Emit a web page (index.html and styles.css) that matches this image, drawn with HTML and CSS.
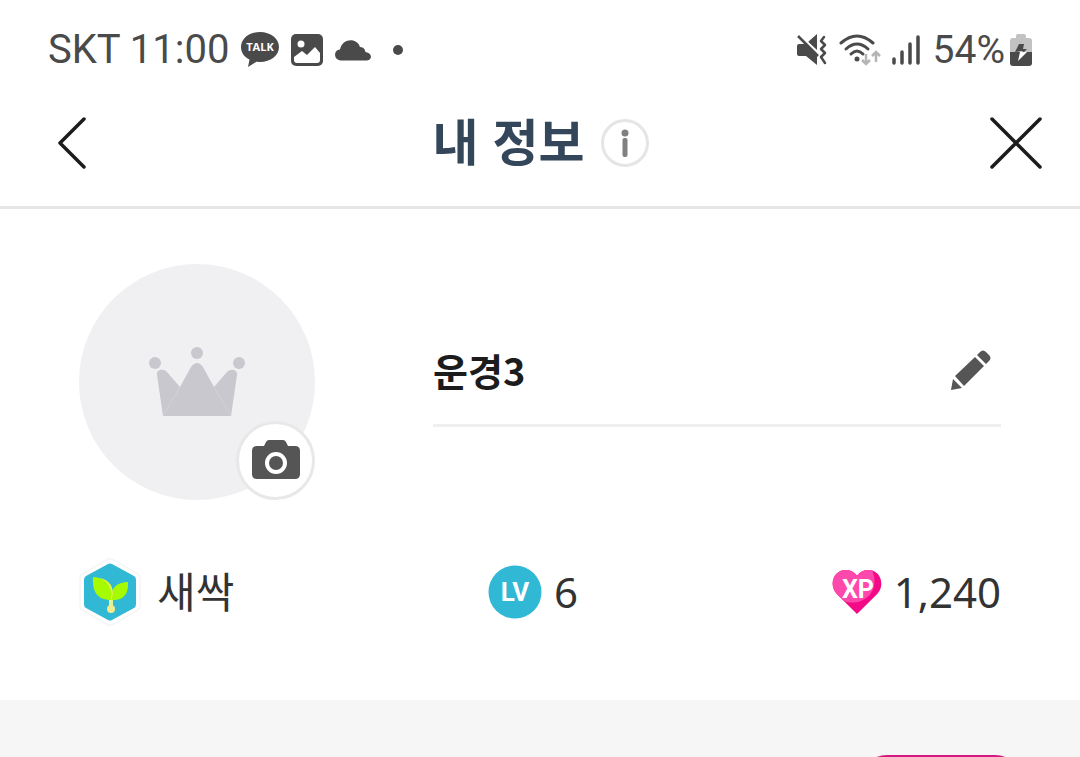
FILE: index.html
```html
<!DOCTYPE html>
<html lang="ko">

<head>
  <meta charset="utf-8">
  <meta name="viewport" content="width=device-width, initial-scale=1">
  <title>내 정보</title>
  <link rel="stylesheet" href="styles.css">
</head>

<body>
  <div class="status-bar">
    <div class="status-left">
      <span class="carrier">SKT 11:00</span>
      <svg class="icon-talk" width="38" height="36" viewBox="0 0 38 36">
        <path fill="#4a4a4a" d="M19 0C8.500 0 0 6.500 0 15c0 5.500 3.300 10 8.500 12.600L7 35l8.500-5.300 3.500.3c10.500 0 19-6.500 19-15S29.500 0 19 0z"/>
        <text x="19" y="19" text-anchor="middle" class="talk-text">TALK</text>
      </svg>
      <svg class="icon-photo" width="32" height="32" viewBox="0 0 32 32">
        <rect width="32" height="32" rx="5" fill="#4a4a4a"/>
        <circle cx="10" cy="10" r="3.500" fill="#fff"/>
        <path fill="#fff" d="M3 23l8-6 5 4 8-8 5 6v7q0 3-3 3H6q-3 0-3-3z"/>
      </svg>
      <svg class="icon-cloud" width="36" height="21" viewBox="0 0 36 21">
        <path fill="#4a4a4a" d="M6 20.500C-2 20-1.500 10 5 9.500 7-2 22-3 25 7c4 0 5 3 5.500 5 7 1 7 8 1.500 8.500z"/>
      </svg>
      <span class="dot"></span>
    </div>
    <div class="status-right">
      <svg width="32" height="32" viewBox="0 0 32 32">
        <path fill="#4a4a4a" d="M1 12q0-2 2-2h7l11 12v9L10 22H3q-2 0-2-2zM12 8l9-8v16z"/>
        <path fill="none" stroke="#fff" stroke-width="2" d="M4 1l20 20"/>
        <path fill="none" stroke="#4a4a4a" stroke-width="2.500" d="M2 2l20 20"/>
        <path fill="none" stroke="#4a4a4a" stroke-width="2.500" stroke-linejoin="round" stroke-linecap="round" d="M28 3l-3 4 4 4-4 4 4 4-4 4 4 6"/>
      </svg>
      <svg class="icon-wifi" width="42" height="32" viewBox="0 0 42 32">
        <g fill="none" stroke="#4a4a4a" stroke-width="3" stroke-linecap="round">
          <path d="M2 9q16-14 32 0"/>
          <path d="M7 15q11-10 22 0"/>
          <path d="M12 20q6-6 12 0"/>
        </g>
        <circle cx="18" cy="25" r="2.500" fill="#4a4a4a"/>
        <path fill="none" stroke="#b5b5b5" stroke-width="2.500" d="M27 20v10m-4-4l4 4 4-4M37 28V18m-4 4l4-4 4 4"/>
      </svg>
      <svg class="icon-signal" width="28" height="30" viewBox="0 0 28 30">
        <path fill="none" stroke="#4a4a4a" stroke-width="3.500" stroke-linecap="round" d="M2 24v4M10 17v11M18 9v19M26 2v26"/>
      </svg>
      <span class="battery-level">54%</span>
      <svg class="icon-battery" width="22" height="32" viewBox="0 0 22 32">
        <path fill="#c2c2c2" d="M6 4V2q0-2 2-2h6q2 0 2 2v2h3q3 0 3 3v11H0V7q0-3 3-3z"/>
        <path fill="#4a4a4a" d="M0 18h22v11q0 3-3 3H3q-3 0-3-3z"/>
        <path fill="#4a4a4a" d="M9 10h5l-1 5h4l-3 3H5z"/>
        <path fill="#fff" d="M5 18h5l-2 9 9-9h-5l1-1z"/>
      </svg>
    </div>
  </div>

  <header class="header">
    <button class="icon-btn" type="button" aria-label="뒤로">
      <svg width="30" height="52" viewBox="0 0 30 52">
        <path fill="none" stroke="#1c1c1c" stroke-width="3.500" stroke-linecap="round" stroke-linejoin="round" d="M27 2L3 26l24 24"/>
      </svg>
    </button>
    <div class="title-wrap">
      <h1 class="title">내 정보</h1>
      <button class="info-btn" type="button" aria-label="안내">
        <svg width="8" height="28" viewBox="0 0 8 28">
          <circle cx="4" cy="4" r="3.500" fill="#808080"/>
          <rect x="1.500" y="9" width="5" height="19" rx="2" fill="#808080"/>
        </svg>
      </button>
    </div>
    <button class="icon-btn" type="button" aria-label="닫기">
      <svg width="52" height="52" viewBox="0 0 52 52">
        <path fill="none" stroke="#1c1c1c" stroke-width="3.500" stroke-linecap="round" d="M2 2l48 48M50 2L2 50"/>
      </svg>
    </button>
  </header>

  <main class="profile">
    <div class="profile-top">
      <div class="avatar">
        <svg width="96" height="70" viewBox="0 0 96 70">
          <g fill="#c9c8ce">
            <circle cx="6" cy="16" r="6"/>
            <circle cx="48" cy="6" r="6"/>
            <circle cx="90" cy="16" r="6"/>
            <path d="M14 69L8 28c-1-5 6-7 10-3l13 15 11-20q6-8 12 0l11 20 13-15c4-4 11-2 10 3l-6 41z"/>
          </g>
          <path fill="none" stroke="#d3d2d8" stroke-width="1" d="M14 69l17-29M82 69L65 40"/>
        </svg>
        <button class="camera-btn" type="button" aria-label="사진 변경">
          <svg width="48" height="40" viewBox="0 0 48 40">
            <path fill="#555" d="M5 6h7l2-4q1-2 3-2h14q2 0 3 2l2 4h7q5 0 5 5v23q0 5-5 5H5q-5 0-5-5V11q0-5 5-5z"/>
            <circle cx="24" cy="23" r="9" fill="#555" stroke="#fff" stroke-width="4"/>
          </svg>
        </button>
      </div>
      <div class="name-row">
        <span class="name">운경3</span>
        <button class="icon-btn" type="button" aria-label="이름 수정">
          <svg width="40" height="40" viewBox="0 0 40 40">
            <path fill="#555" d="M0 40l2-11 9 9zM4 26L24 7l9 9-20 20zM26 5l3-3q3-3 6 0l3 3q3 3 0 6l-3 3z"/>
          </svg>
        </button>
      </div>
    </div>

    <div class="stats">
      <div class="stat">
        <svg class="badge" width="62" height="68" viewBox="0 0 62 68">
          <path fill="#fff" stroke="#f7f7f7" stroke-width="2" stroke-linejoin="round" d="M27 2q4-2 8 0l22 13q4 2 4 7v24q0 5-4 7L35 66q-4 2-8 0L5 53q-4-2-4-7V22q0-5 4-7z"/>
          <path fill="#30b8d5" d="M29 6q2-1 4 0l22 12q2 1 2 4v24q0 3-2 4L33 62q-2 1-4 0L7 50q-2-1-2-4V22q0-3 2-4z"/>
          <path fill="none" stroke="#dff59a" stroke-width="4" d="M32 38v14"/>
          <circle cx="32" cy="51" r="4" fill="#f3ec8c"/>
          <path fill="#a6fb00" d="M32 42C18 42 13 33 14 19c14 1 20 8 18 23zM33 42c-2-12 5-18 16-18 1 12-5 19-16 18z"/>
          <path fill="#e2f84a" d="M21 20c9 4 13 13 11 22 5-9 0-20-11-22z"/>
        </svg>
        <span class="stat-text">새싹</span>
      </div>
      <div class="stat">
        <svg width="54" height="54" viewBox="0 0 54 54">
          <circle cx="27" cy="27" r="26.500" fill="#30b8d5"/>
          <text x="27" y="36" text-anchor="middle" class="badge-text">LV</text>
        </svg>
        <span class="stat-text">6</span>
      </div>
      <div class="stat">
        <svg class="heart" width="50" height="48" viewBox="0 0 52 48">
          <path fill="#f20a87" d="M26 47L5 26C-4 16 2 1 14 1q8 0 12 6 4-6 12-6c12 0 18 15 9 25z"/>
          <path fill="#ff48ab" d="M13 34l-8-8C-4 16 2 1 14 1q8 0 12 6 4-6 12-6l4 1c8 20-7 37-29 32z"/>
          <text x="27" y="30" text-anchor="middle" class="badge-text">XP</text>
        </svg>
        <span class="stat-text">1,240</span>
      </div>
    </div>
  </main>

  <section class="more">
    <button class="more-btn" type="button" aria-label="더보기"></button>
  </section>
</body>

</html>
```
FILE: styles.css
```css
* {
  box-sizing: border-box;
}
body {
  display: flex;
  flex-direction: column;
  height: 100vh;
  margin: 0;
  overflow: hidden;
  background-color: #fff;
  color: #333;
  font-family: "Noto Sans", "Noto Sans CJK KR", sans-serif;
}
button {
  padding: 0;
  border: none;
  background: none;
  cursor: pointer;
}
svg {
  display: block;
  flex-shrink: 0;
}

/* status bar */
.status-bar {
  display: flex;
  justify-content: space-between;
  align-items: center;
  flex-shrink: 0;
  height: 80px;
  padding: 20px 48px 0;
  color: #4a4a4a;
  font-family: Roboto, sans-serif;
  font-size: 40px;
  line-height: 60px;
}
.status-left,
.status-right {
  display: flex;
  align-items: center;
}
.status-left {
  gap: 12px;
}
.status-right {
  gap: 11px;
}
.talk-text {
  fill: #fff;
  font-family: "Open Sans", sans-serif;
  font-size: 11px;
  font-weight: 700;
}
.dot {
  width: 10px;
  height: 10px;
  margin-left: 10px;
  border-radius: 50%;
  background-color: #4a4a4a;
}
.battery-level {
  margin: 0 -6px 0 2px;
  font-size: 39px;
}

/* header */
.header {
  display: flex;
  justify-content: space-between;
  align-items: center;
  flex-shrink: 0;
  height: 129px;
  padding: 0 38px 0 57px;
  border-bottom: 3px solid #e5e5e5;
}
.title-wrap {
  display: flex;
  align-items: center;
  gap: 16px;
  padding-left: 4px;
}
.title {
  margin: 0;
  padding-bottom: 8px;
  color: #34475a;
  font-family: "Noto Sans CJK KR", sans-serif;
  font-size: 50px;
  font-weight: 700;
  line-height: 60px;
}
.info-btn {
  display: flex;
  justify-content: center;
  align-items: center;
  width: 48px;
  height: 48px;
  border: 3px solid #e5e5e5;
  border-radius: 50%;
}

/* profile */
.profile {
  flex-shrink: 0;
  padding: 55px 79px 74px;
}
.profile-top {
  display: flex;
  align-items: center;
  gap: 118px;
}
.avatar {
  position: relative;
  display: flex;
  justify-content: center;
  align-items: center;
  flex-shrink: 0;
  width: 236px;
  height: 236px;
  border-radius: 50%;
  background-color: #f0f0f3;
}
.camera-btn {
  position: absolute;
  right: 0;
  bottom: 0;
  display: flex;
  justify-content: center;
  align-items: center;
  width: 79px;
  height: 79px;
  padding-bottom: 2px;
  border: 3px solid #e8e8e8;
  border-radius: 50%;
  background-color: #fff;
}
.name-row {
  display: flex;
  justify-content: space-between;
  align-items: center;
  flex: 1;
  height: 114px;
  margin-bottom: 24px;
  padding: 2px 10px 0 0;
  border-bottom: 3px solid #efefef;
}
.name {
  color: #1c1c1c;
  font-family: "Noto Sans CJK KR", sans-serif;
  font-size: 38px;
  font-weight: 700;
}
.stats {
  display: flex;
  justify-content: space-between;
  align-items: center;
  margin-top: 58px;
}
.stat {
  display: flex;
  align-items: center;
  gap: 12px;
}
.stat-text {
  font-size: 42px;
  line-height: 68px;
}
.badge {
  margin-right: 4px;
}
.badge-text {
  fill: #fff;
  font-family: Roboto, sans-serif;
  font-size: 26px;
  font-weight: 700;
}

/* next section */
.more {
  display: flex;
  justify-content: flex-end;
  flex: 1;
  min-height: 0;
  padding: 55px 57px 0;
  background-color: #f6f6f6;
}
.more-btn {
  flex-shrink: 0;
  width: 164px;
  height: 56px;
  border-radius: 28px;
  background-color: #d3187f;
}
```
